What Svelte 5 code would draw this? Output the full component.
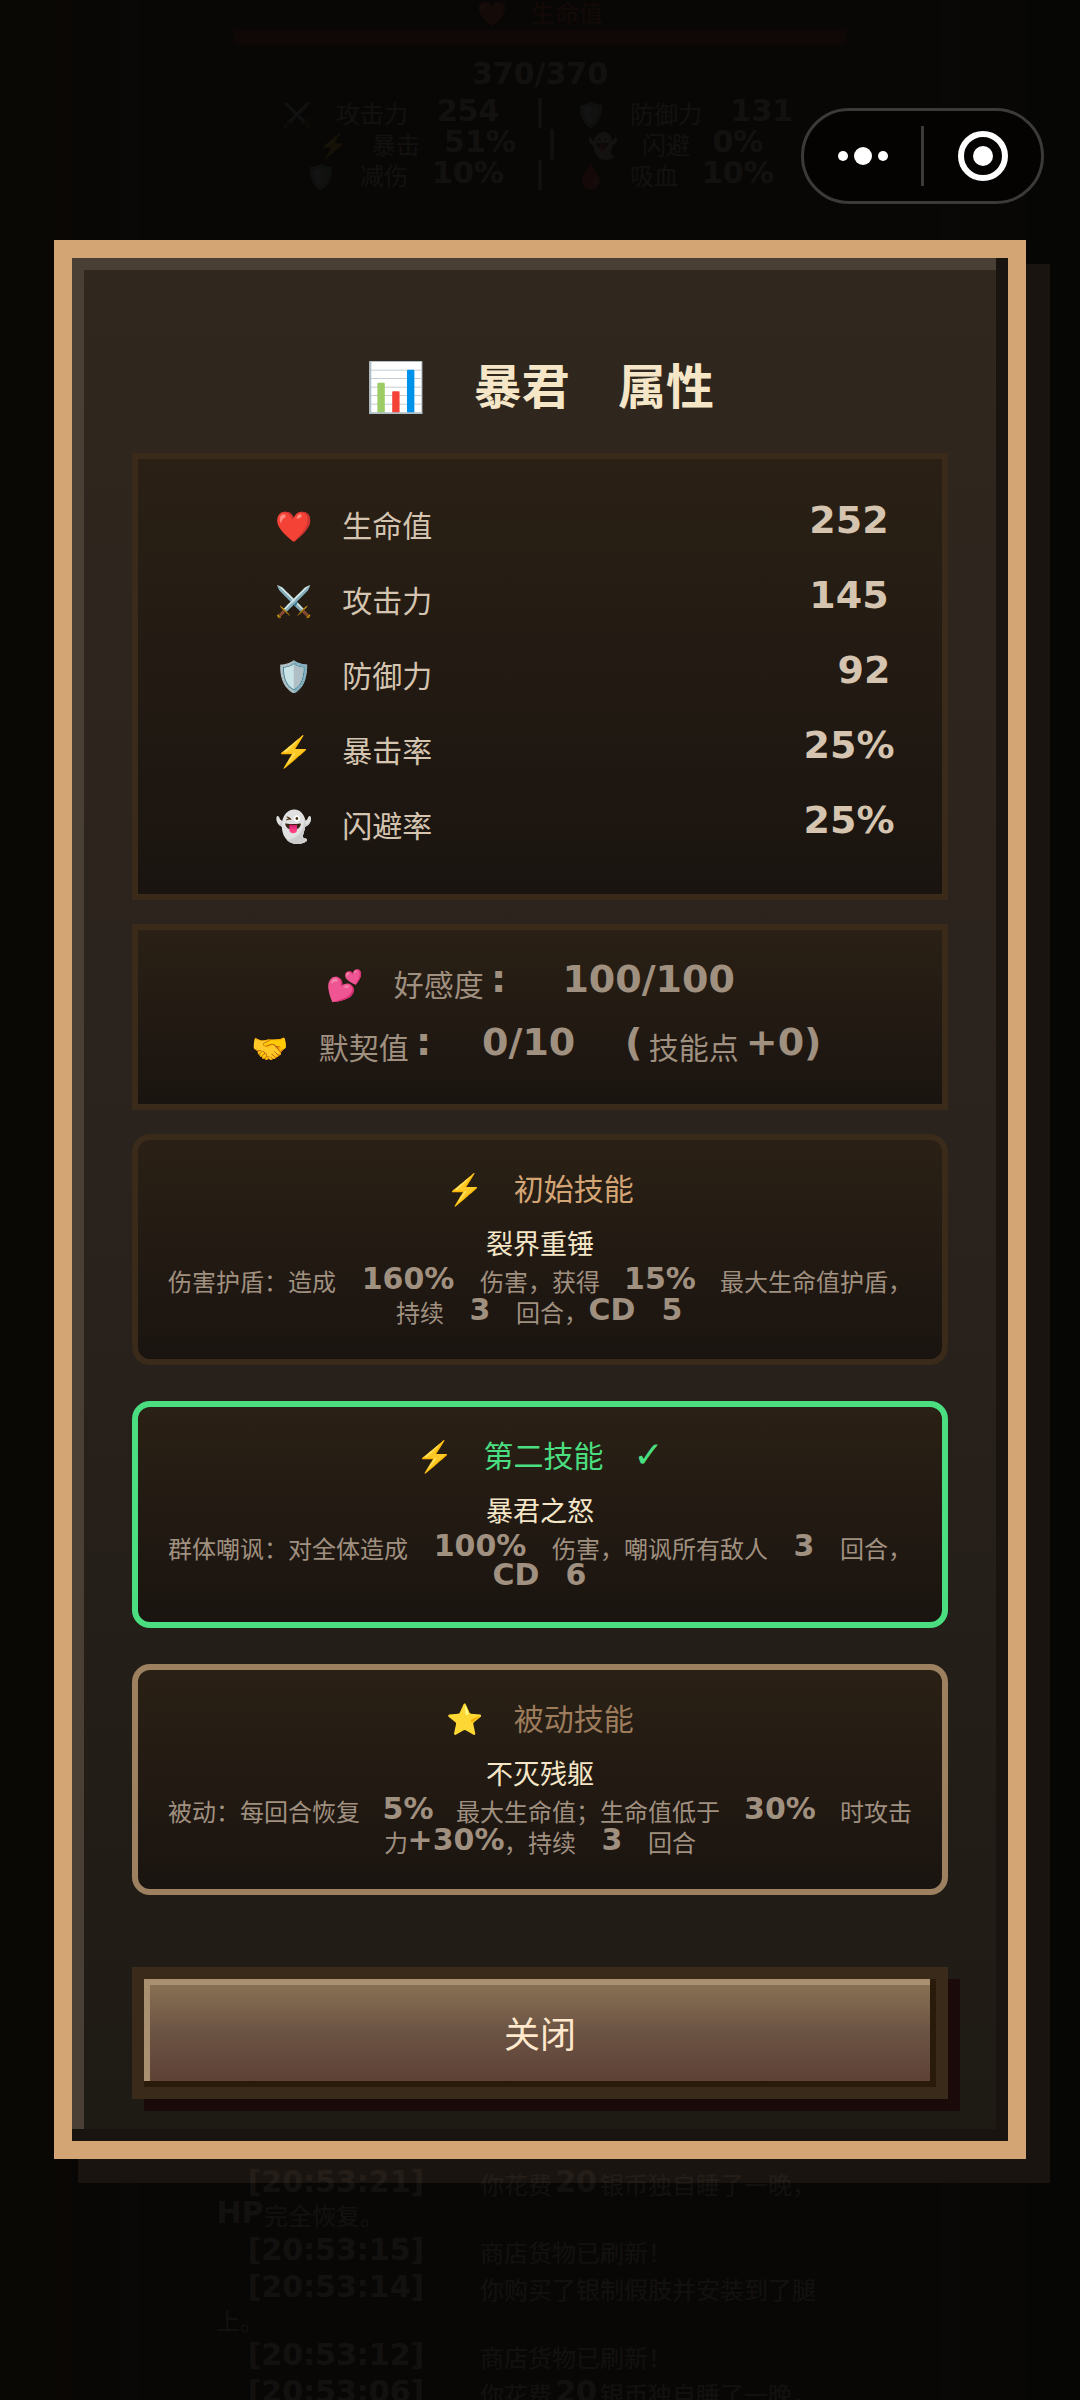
<script>
  const heroLines = [
    '⚔️ 攻击力 254 | 🛡️ 防御力 131',
    '⚡ 暴击 51% | 👻 闪避 0%',
    '🛡️ 减伤 10% | 🩸 吸血 10%',
  ];

  const logs = [
    '[20:53:21] 你花费20银币独自睡了一晚，HP完全恢复。',
    '[20:53:15] 商店货物已刷新！',
    '[20:53:14] 你购买了银制假肢并安装到了腿上。',
    '[20:53:12] 商店货物已刷新！',
    '[20:53:06] 你花费20银币独自睡了一晚，HP完全恢复。',
  ];

  const stats = [
    { icon: '❤️', label: '生命值', value: '252' },
    { icon: '⚔️', label: '攻击力', value: '145' },
    { icon: '🛡️', label: '防御力', value: '92' },
    { icon: '⚡', label: '暴击率', value: '25%' },
    { icon: '👻', label: '闪避率', value: '25%' },
  ];

  const skills = [
    {
      type: 'initial',
      title: '⚡ 初始技能',
      name: '裂界重锤',
      desc: '伤害护盾：造成 160% 伤害，获得 15% 最大生命值护盾，持续 3 回合，CD 5',
    },
    {
      type: 'second',
      title: '⚡ 第二技能 ✓',
      name: '暴君之怒',
      desc: '群体嘲讽：对全体造成 100% 伤害，嘲讽所有敌人 3 回合，CD 6',
    },
    {
      type: 'passive',
      title: '⭐ 被动技能',
      name: '不灭残躯',
      desc: '被动：每回合恢复 5% 最大生命值；生命值低于 30% 时攻击力+30%，持续 3 回合',
    },
  ];

  let open = $state(true);

  function kindOf(run) {
    if (/^\s/.test(run)) return 'gap';
    if (/^[!-~]/.test(run)) return 'num';
    return run === '✓' ? 'tick' : 'han';
  }

  // Latin runs and spaces take one full cell per character, like the Chinese text
  function split(text) {
    return text.match(/\s+|[!-~]+|[^\s!-~]+/g).map((run) => ({ run, kind: kindOf(run) }));
  }
</script>

{#snippet cells(text)}{#each split(text) as part}{#if part.kind === 'num'}<span class="num" style:width="{part.run.length}em"><span class="glyphs">{part.run}</span></span>{:else}<span class={part.kind}>{part.run}</span>{/if}{/each}{/snippet}

<div class="screen">
  <div class="game" aria-hidden="true">
    <div class="hero">
      <div class="hp-label">{@render cells('❤️ 生命值')}</div>
      <div class="hp-bar"></div>
      <div class="hp-value">{@render cells('370/370')}</div>
      {#each heroLines as line}
        <div class="hero-line">{@render cells(line)}</div>
      {/each}
    </div>
    <div class="log">
      {#each logs as line}
        <p>{@render cells(line)}</p>
      {/each}
    </div>
  </div>

  {#if open}
    <div class="overlay">
      <div class="modal" role="dialog" aria-labelledby="modal-title">
        <h1 id="modal-title">{@render cells('📊 暴君 属性')}</h1>

        <dl class="panel stats">
          {#each stats as stat}
            <div class="row">
              <dt>{@render cells(stat.icon + ' ' + stat.label)}</dt>
              <dd>{@render cells(stat.value)}</dd>
            </div>
          {/each}
        </dl>

        <div class="panel bond">
          <p>{@render cells('💕 好感度: 100/100')}</p>
          <p>{@render cells('🤝 默契值: 0/10 (技能点+0)')}</p>
        </div>

        <div class="skills">
          {#each skills as skill}
            <section class="panel skill {skill.type}">
              <h2>{@render cells(skill.title)}</h2>
              <h3>{skill.name}</h3>
              <p>{@render cells(skill.desc)}</p>
            </section>
          {/each}
        </div>

        <button class="close" onclick={() => (open = false)}>关闭</button>
      </div>
    </div>
  {/if}

  <div class="capsule">
    <button aria-label="更多">
      <svg width="50" height="20" viewBox="0 0 50 20" fill="#fff">
        <circle cx="5" cy="10" r="5" />
        <circle cx="25" cy="10" r="9" />
        <circle cx="45" cy="10" r="5" />
      </svg>
    </button>
    <i class="divider"></i>
    <button aria-label="退出">
      <svg width="52" height="52" viewBox="0 0 52 52">
        <circle cx="26" cy="26" r="22" fill="none" stroke="#fff" stroke-width="6" />
        <circle cx="26" cy="26" r="10" fill="#fff" />
      </svg>
    </button>
  </div>
</div>

<style>
  :global(body) {
    background: #080705;
  }

  .screen {
    position: relative;
    display: grid;
    min-height: 100vh;
    font-family: 'Noto Sans CJK SC', 'Noto Color Emoji', sans-serif;
    background: #080705;
  }

  .game,
  .overlay {
    grid-area: 1 / 1;
    min-width: 0;
  }

  h1,
  h2,
  h3,
  p,
  dl,
  dd {
    margin: 0;
  }

  .num {
    display: inline-flex;
    justify-content: center;
    line-height: 1;
    vertical-align: 2px;
    white-space: nowrap;
  }

  .glyphs {
    height: 24px;
    padding-bottom: 2px;
    font-family: 'DejaVu Sans', sans-serif;
    font-size: 30px;
    font-weight: bold;
    line-height: 24px;
  }

  .gap {
    display: inline-block;
    width: 1em;
    line-height: 1;
    white-space: pre;
  }

  .tick {
    font-family: 'DejaVu Sans', sans-serif;
    font-size: 36px;
    line-height: 1;
  }

  /* dimmed game page behind the dialog */
  .game {
    display: grid;
    grid-template-rows: 90vh 10vh;
    height: 100vh;
    overflow: hidden;
    font-size: 24px;
    line-height: 31px;
    background: linear-gradient(
      to right,
      #090805 0 54px,
      #0b0705 54px 72px,
      #080705 72px 120px,
      #0a0806 120px 140px,
      #090706 140px 180px,
      #080706 180px calc(100% - 180px),
      #090706 calc(100% - 180px) calc(100% - 140px),
      #0a0806 calc(100% - 140px) calc(100% - 120px),
      #080705 calc(100% - 120px) calc(100% - 54px),
      #060604 calc(100% - 54px)
    );
  }

  .hero,
  .log {
    color: #d4c4b0;
    opacity: 0.05;
  }

  .hero {
    text-align: center;
  }

  .hp-label {
    height: 28px;
    color: #e04030;
    line-height: 2px;
  }

  .hp-bar {
    height: 14px;
    margin: 0 21.5%;
    border: 2px solid #3a2a1a;
    background: #a02018;
  }

  .hp-value {
    margin: 14px 0 6px;
  }

  .log {
    padding: 8px 23% 0 20%;
  }

  .log p {
    margin-bottom: 6px;
  }

  /* dialog */
  .overlay {
    padding: 10vh 5vw;
  }

  .modal {
    padding: 89px 60px 42px;
    border: 18px solid #d4a574;
    background: linear-gradient(#30271e, #2a221d 50%, #1e1a14);
    box-shadow:
      24px 24px 0 #1a1410,
      inset -12px -12px 0 #1a1410,
      inset 12px 12px 0 #4a3f35;
  }

  h1 {
    margin-bottom: 34px;
    color: #f5e6c8;
    font-size: 48px;
    line-height: 72px;
    text-align: center;
  }

  .panel {
    border: 6px solid #3a2a1a;
    background: linear-gradient(#2a2015, #1a1410);
  }

  .stats {
    padding: 30px 48px;
    color: #d4c4b0;
    font-size: 30px;
  }

  .row {
    display: flex;
    justify-content: space-between;
    height: 75px;
    padding-left: 89px;
    line-height: 70px;
  }

  .row .num,
  .bond .num {
    vertical-align: 4px;
  }

  .row .glyphs,
  .bond .glyphs {
    height: 30px;
    padding: 0;
    font-size: 38px;
    line-height: 30px;
  }

  .bond {
    margin: 24px 0;
    padding: 22px 24px 26px;
    color: #a09080;
    font-size: 30px;
    line-height: 63px;
    text-align: center;
  }

  .bond p {
    height: 63px;
  }

  .skills {
    display: grid;
    gap: 36px;
    margin-bottom: 72px;
  }

  .skill {
    padding: 23px 30px 32px;
    border-radius: 18px;
    text-align: center;
  }

  .skill h2 {
    height: 48px;
    font-size: 30px;
    font-weight: normal;
    line-height: 48px;
  }

  .skill h3 {
    margin-top: 10px;
    color: #f5e6c8;
    font-size: 27px;
    font-weight: normal;
    line-height: 44px;
  }

  .skill p {
    color: #a09080;
    font-size: 24px;
    line-height: 26px;
  }

  .skill p .han {
    line-height: 31px;
  }

  .initial h2 {
    color: #d4a574;
  }

  .second {
    border-color: #4ade80;
  }

  .second h2 {
    color: #4ade80;
  }

  .passive {
    border-color: #9c8060;
  }

  .passive h2 {
    color: #9c7c5c;
  }

  .close {
    display: block;
    width: 100%;
    height: 132px;
    padding: 0 0 2px;
    border: 12px solid #3a2a1a;
    color: #ffe8cc;
    font-family: inherit;
    font-size: 36px;
    background: linear-gradient(#8b7355, #6b5344 50%, #5c4033);
    box-shadow:
      12px 12px 0 #1a0a0a,
      inset -6px -6px 0 #2a1a0a,
      inset 6px 6px 0 #a89070;
  }

  /* floats above everything */
  .capsule {
    position: absolute;
    top: 108px;
    right: 36px;
    display: flex;
    align-items: center;
    box-sizing: border-box;
    width: 243px;
    height: 96px;
    border: 3px solid #3c3a38;
    border-radius: 48px;
    background: #040302;
  }

  .capsule button {
    display: flex;
    flex: 1;
    align-items: center;
    justify-content: center;
    padding: 0;
    border: 0;
    background: none;
  }

  .divider {
    width: 3px;
    height: 60px;
    background: #3c3a38;
  }
</style>
